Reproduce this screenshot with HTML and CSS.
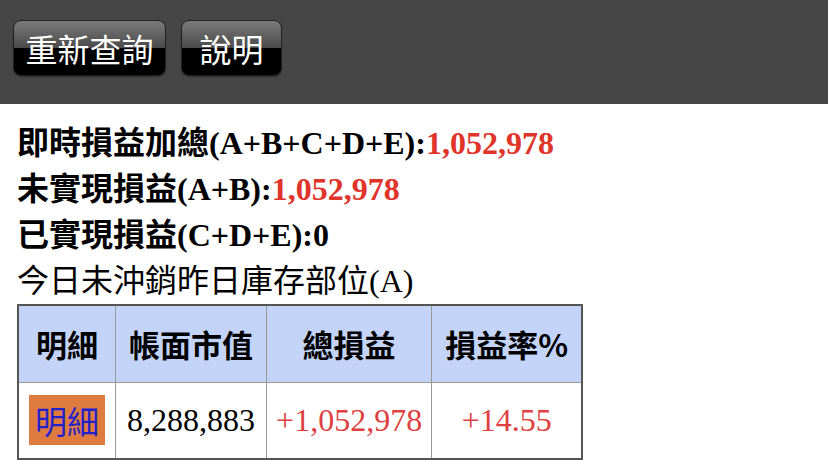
FILE: index.html
```html
<!DOCTYPE html>
<html lang="zh-Hant">

<head>
  <meta charset="UTF-8">
  <meta name="viewport" content="width=device-width, initial-scale=1.0">
  <title>即時損益</title>
  <link rel="stylesheet" href="styles.css">
</head>

<body>
  <header class="toolbar">
    <button class="tool-btn btn-wide">重新查詢</button>
    <button class="tool-btn">說明</button>
  </header>

  <main class="summary">
    <p class="line bold">即時損益加總(A+B+C+D+E):<span class="red">1,052,978</span></p>
    <p class="line bold">未實現損益(A+B):<span class="red">1,052,978</span></p>
    <p class="line bold">已實現損益(C+D+E):0</p>
    <p class="line">今日未沖銷昨日庫存部位(A)</p>

    <table class="pos-table">
      <tr>
        <th class="c1">明細</th>
        <th class="c2">帳面市值</th>
        <th class="c3">總損益</th>
        <th class="c4">損益率%</th>
      </tr>
      <tr>
        <td><a class="detail" href="#">明細</a></td>
        <td>8,288,883</td>
        <td class="red">+1,052,978</td>
        <td class="red">+14.55</td>
      </tr>
    </table>
  </main>
</body>

</html>
```

FILE: styles.css
```css
* {
  padding: 0;
  margin: 0;
  box-sizing: border-box;
}

body {
  font-family: "Liberation Serif", "Noto Sans CJK TC", serif;
  width: 828px;
  height: 460px;
  overflow: hidden;
  background-color: white;
  color: black;
}

.toolbar {
  height: 104px;
  background-color: #464646;
  display: flex;
  gap: 15px;
  padding: 20px 0 0 13px;
}

.tool-btn {
  height: 56px;
  width: 101px;
  font-family: "Noto Sans CJK TC", sans-serif;
  font-size: 32px;
  line-height: 1;
  color: white;
  border: 1px solid #222;
  border-radius: 8px;
  background: linear-gradient(#7a7a7a, #4a4a4a 50%, #000 50%, #000);
  box-shadow: 0 1px 1px rgba(0, 0, 0, .4);
}

.btn-wide {
  width: 153px;
}

.summary {
  padding: 16px 0 0 17px;
}

.line {
  font-size: 32px;
  line-height: 46px;
  white-space: nowrap;
}

.bold {
  font-weight: bold;
}

.red {
  color: #e0342b;
}

.pos-table {
  border-collapse: collapse;
  border: 2px solid #555;
  width: 566px;
}

th,
td {
  height: 77px;
  text-align: center;
  border: 1px solid #999;
  font-size: 32px;
}

th {
  background-color: #c4d4f8;
  font-family: "Noto Sans CJK TC", sans-serif;
  font-weight: bold;
  font-size: 31px;
}

td.red {
  color: #e04040;
}

.c1 { width: 98px; }
.c2 { width: 151px; }
.c3 { width: 166px; }
.c4 { width: 151px; }

.detail {
  display: inline-block;
  vertical-align: middle;
  background-color: #e07b40;
  color: #2222cc;
  text-decoration: none;
  font-family: "Noto Sans CJK TC", sans-serif;
  font-size: 32px;
  line-height: 50px;
  width: 76px;
}
```
